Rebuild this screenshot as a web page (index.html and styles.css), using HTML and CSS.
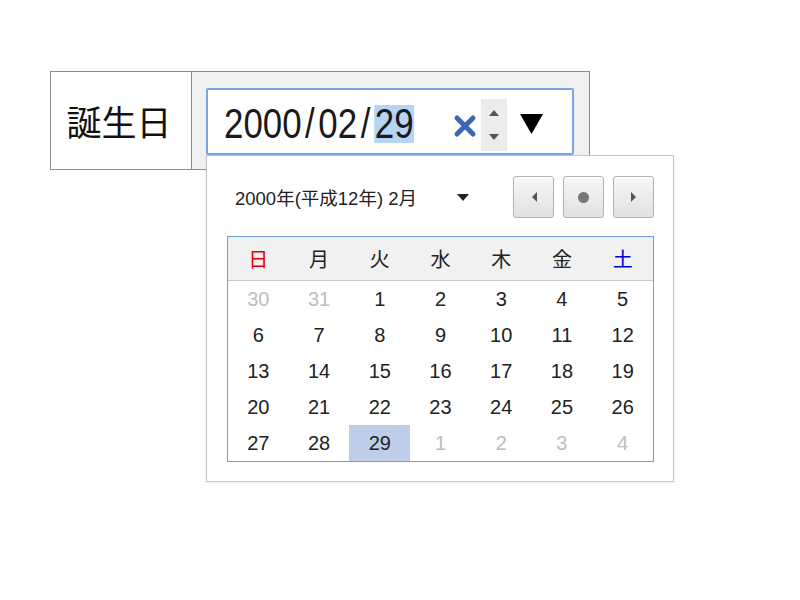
FILE: index.html
```html
<!DOCTYPE html>
<html lang="ja">
<head>
<meta charset="utf-8">
<title>誕生日</title>
<link rel="stylesheet" href="styles.css">
</head>
<body>
<div class="page">
  <div class="field">
    <div class="label">誕生日</div>
    <div class="control">
      <div class="input-wrap">
        <div class="input">
          <span class="value">2000<span class="sl">/</span>02<span class="sl">/</span><span class="sel">29</span></span>
          <svg class="clear" width="24" height="26" viewBox="0 0 24 26"><path d="M4 5 L20 21 M20 5 L4 21" stroke="#3b67b3" stroke-width="5" stroke-linecap="round" fill="none"/></svg>
          <div class="spin">
            <svg width="12" height="8" viewBox="0 0 12 8"><path d="M1 7 L6 1 L11 7 Z" fill="#555"/></svg>
            <svg width="12" height="8" viewBox="0 0 12 8"><path d="M1 1 L6 7 L11 1 Z" fill="#555"/></svg>
          </div>
          <svg class="drop" width="23" height="20" viewBox="0 0 23 20"><path d="M0 0 L23 0 L11.5 20 Z" fill="#000"/></svg>
        </div>
        <div class="popup">
          <div class="pop-head">
            <div class="title">2000年(平成12年) 2月<svg class="caret" width="12" height="7" viewBox="0 0 12 7"><path d="M0 0 L12 0 L6 7 Z" fill="#222"/></svg></div>
            <div class="navs">
              <div class="nbtn"><svg width="8" height="12" viewBox="0 0 8 12"><path d="M7 1 L2 6 L7 11 Z" fill="#555"/></svg></div>
              <div class="nbtn"><span class="dot"></span></div>
              <div class="nbtn"><svg width="8" height="12" viewBox="0 0 8 12"><path d="M1 1 L6 6 L1 11 Z" fill="#555"/></svg></div>
            </div>
          </div>
          <div class="cal">
            <div class="wk">
              <span class="sun">日</span><span>月</span><span>火</span><span>水</span><span>木</span><span>金</span><span class="sat">土</span>
            </div>
            <div class="days">
              <span class="o">30</span><span class="o">31</span><span>1</span><span>2</span><span>3</span><span>4</span><span>5</span>
              <span>6</span><span>7</span><span>8</span><span>9</span><span>10</span><span>11</span><span>12</span>
              <span>13</span><span>14</span><span>15</span><span>16</span><span>17</span><span>18</span><span>19</span>
              <span>20</span><span>21</span><span>22</span><span>23</span><span>24</span><span>25</span><span>26</span>
              <span>27</span><span>28</span><span class="cur">29</span><span class="o">1</span><span class="o">2</span><span class="o">3</span><span class="o">4</span>
            </div>
          </div>
        </div>
      </div>
    </div>
  </div>
</div>
</body>
</html>
```

FILE: styles.css
```css
* { box-sizing: border-box; }
html, body { margin: 0; padding: 0; background: #fff; }
body {
  font-family: "Liberation Sans", "Noto Sans CJK JP", sans-serif;
  color: #222;
  min-height: 600px;
}

.page { padding: 71px 0 0 50px; min-height: 600px; }

.field {
  display: flex;
  width: 540px;
  height: 99px;
  border: 1px solid #8a8a8a;
}

.label {
  width: 141px;
  border-right: 1px solid #8a8a8a;
  display: flex;
  align-items: center;
  justify-content: center;
  font-family: "Noto Sans CJK JP", sans-serif;
  font-size: 35px;
  color: #111;
  background: #fff;
  padding-right: 4px;
}

.control {
  flex: 1;
  background: #f0f0f0;
  padding: 16px 14px 0 14px;
}

.input-wrap { position: relative; width: 368px; }

.input {
  height: 67px;
  border: 2px solid #7ca4e2;
  border-radius: 2px;
  background: #fff;
  display: flex;
  align-items: center;
  padding: 0 29px 0 16px;
}

.value {
  display: inline-block;
  white-space: nowrap;
  flex-shrink: 0;
  font-family: "Liberation Sans", sans-serif;
  font-size: 42px;
  line-height: 38px;
  color: #1a1a1a;
  margin-top: 4px;
  transform: scaleX(0.83);
  transform-origin: left center;
}
.sl { margin: 0 4.3px; }
.sel {
  display: inline-block;
  line-height: 38px;
  background: #b6d4f6;
  padding: 0 1px;
}

.clear { margin-left: auto; margin-top: 8px; flex-shrink: 0; }

.spin {
  flex-shrink: 0;
  width: 26px;
  height: 52px;
  margin-left: 4px;
  margin-top: 6px;
  background: #ececec;
  display: flex;
  flex-direction: column;
  align-items: center;
  justify-content: space-between;
  padding: 10px 0 10px;
}

.drop { margin-left: 13px; margin-top: 5px; flex-shrink: 0; }

.popup {
  position: absolute;
  top: 100%;
  left: 0;
  width: 468px;
  background: #fff;
  border: 1px solid #c6c6c6;
  box-shadow: 0 1px 2px rgba(0,0,0,0.08);
  padding: 0 19px 19px 20px;
  z-index: 2;
}

.pop-head {
  height: 80px;
  display: flex;
  align-items: center;
}

.title {
  padding-left: 8px;
  font-family: "Liberation Sans", "Noto Sans CJK JP", sans-serif;
  font-size: 18.5px;
  color: #222;
  display: flex;
  align-items: center;
  margin-top: 2px;
  white-space: nowrap;
}
.caret { margin-left: 40px; margin-top: 1px; }

.navs { margin-left: auto; display: flex; gap: 9px; margin-top: 2px; }
.nbtn {
  width: 41px;
  height: 42px;
  border: 1px solid #b2b2b2;
  border-radius: 3px;
  background: linear-gradient(#f7f7f7, #e1e1e1);
  box-shadow: inset 0 1px 0 #fff;
  display: flex;
  align-items: center;
  justify-content: center;
}
.dot { width: 11px; height: 11px; border-radius: 50%; background: #777; }

.cal {
  border: 1px solid #6d9de6;
}
.wk {
  display: grid;
  grid-template-columns: repeat(7, 1fr);
  height: 44px;
  background: #f1f1f1;
  border-bottom: 1px solid #c9c9c9;
  font-family: "Noto Sans CJK JP", sans-serif;
  font-size: 20px;
  color: #222;
}
.wk span { display: flex; align-items: center; justify-content: center; }
.wk .sun { color: #e60000; }
.wk .sat { color: #0000cc; }

.days {
  display: grid;
  grid-template-columns: repeat(7, 1fr);
  grid-auto-rows: 36px;
  font-size: 20px;
}
.days span { display: flex; align-items: center; justify-content: center; color: #222; }
.days .o { color: #bdbdbd; }
.days .cur { background: #bdcdea; }
```
